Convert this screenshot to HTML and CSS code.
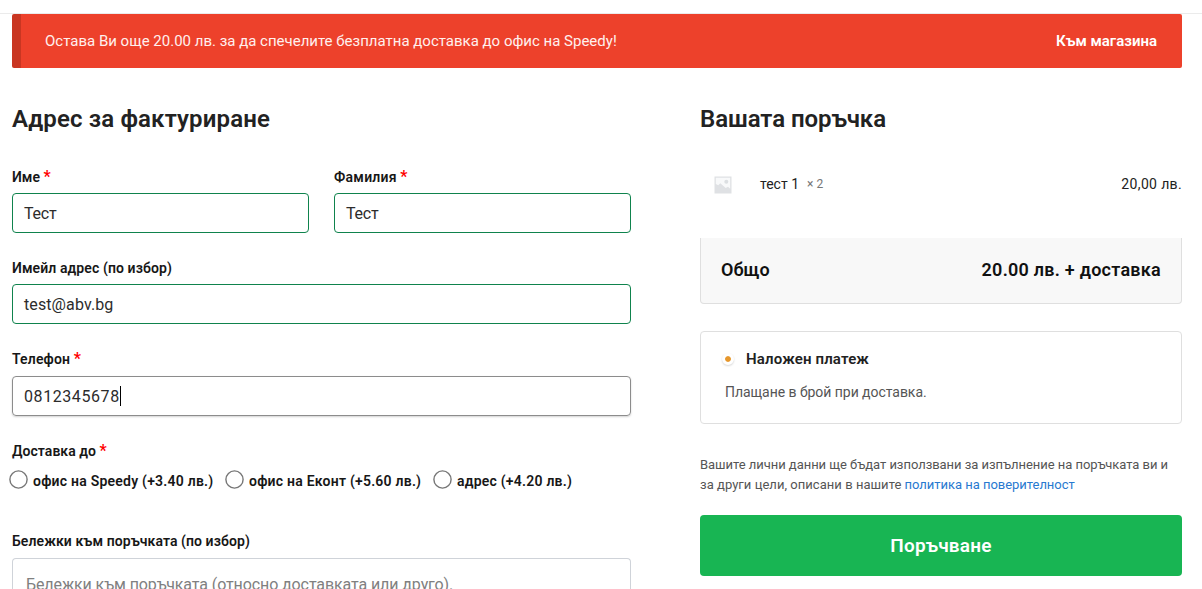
FILE: index.html
```html
<!DOCTYPE html>
<html lang="bg">
<head>
<meta charset="utf-8">
<title>Поръчка</title>
<link rel="stylesheet" href="styles.css">
</head>
<body>
<div class="topline"></div>
<div class="notice">
  <span class="notice-text">Остава Ви още 20.00 лв. за да спечелите безплатна доставка до офис на Speedy!</span>
  <a class="notice-link">Към магазина</a>
</div>
<main class="checkout">
  <section class="billing">
    <h2 class="title"><span class="t-billing">Адрес за фактуриране</span></h2>
    <div class="row">
      <div class="field">
        <div class="label"><span class="l-name">Име</span> <b class="req">*</b></div>
        <div class="input valid"><span class="v-test">Тест</span></div>
      </div>
      <div class="field">
        <div class="label"><span class="l-family">Фамилия</span> <b class="req">*</b></div>
        <div class="input valid"><span class="v-test">Тест</span></div>
      </div>
    </div>
    <div class="field">
      <div class="label"><span class="l-mail">Имейл адрес (по избор)</span></div>
      <div class="input valid"><span class="v-mail">test@abv.bg</span></div>
    </div>
    <div class="field phone">
      <div class="label"><span class="l-phone">Телефон</span> <b class="req">*</b></div>
      <div class="input focused"><span class="v-phone">0812345678</span><i class="caret"></i></div>
    </div>
    <div class="delivery">
      <div class="label"><span class="l-delivery">Доставка до</span> <b class="req">*</b></div>
      <div class="options">
        <div class="option"><svg class="radio" viewBox="0 0 19 19"><circle cx="9.5" cy="9.5" r="8.6"/></svg><span>офис на Speedy (+3.40 лв.)</span></div>
        <div class="option"><svg class="radio" viewBox="0 0 19 19"><circle cx="9.5" cy="9.5" r="8.6"/></svg><span>офис на Еконт (+5.60 лв.)</span></div>
        <div class="option"><svg class="radio" viewBox="0 0 19 19"><circle cx="9.5" cy="9.5" r="8.6"/></svg><span>адрес (+4.20 лв.)</span></div>
      </div>
    </div>
    <div class="field notes">
      <div class="label"><span class="l-notes">Бележки към поръчката (по избор)</span></div>
      <div class="textarea"><span class="v-notes">Бележки към поръчката (относно доставката или друго).</span></div>
    </div>
  </section>
  <section class="order">
    <h2 class="title"><span class="t-order">Вашата поръчка</span></h2>
    <div class="item">
      <svg class="thumb" width="18" height="18" viewBox="0 0 18 18">
        <rect x="0.5" y="0.5" width="17" height="17" fill="#dfe1e4"/>
        <path d="M1.8 1.8h14.4v11l-2.2-2-2.3 1.3-5.4-4.8-2 2-2.5-1.2z" fill="#f8f9fa"/>
        <circle cx="12.3" cy="5.8" r="2" fill="#dcdfe2"/>
      </svg>
      <span class="item-name">тест 1</span>
      <span class="item-qty">× 2</span>
      <span class="item-price">20,00 лв.</span>
    </div>
    <div class="total">
      <span class="total-label">Общо</span>
      <span class="total-sum">20.00 лв. + доставка</span>
    </div>
    <div class="payment">
      <div class="method"><i class="dot"></i><span class="method-name">Наложен платеж</span></div>
      <div class="method-info"><span>Плащане в брой при доставка.</span></div>
    </div>
    <div class="privacy">
      <div><span class="p-one">Вашите лични данни ще бъдат използвани за изпълнение на поръчката ви и</span></div>
      <div><span class="p-two">за други цели, описани в нашите</span> <a class="p-link">политика на поверителност</a></div>
    </div>
    <div class="submit"><span>Поръчване</span></div>
  </section>
</main>
</body>
</html>
```
FILE: styles.css
```css
* { box-sizing: border-box; }
html, body { height: 589px; overflow: hidden; }
body { margin: 0; background: #fff; color: #222; font-family: Roboto, "Noto Sans", sans-serif; }
.topline { height: 14px; border-bottom: 1px solid #ebebeb; }
.notice { display: flex; justify-content: space-between; align-items: center; height: 54px; margin: 0 20px 0 12px; padding: 0 25px 0 24px; border-left: 9px solid #c93622; border-radius: 2px; background: #ed412b; color: #fff; font-size: 15px; line-height: 20px; }
.notice-text { color: #fff0ee; }
.notice-link { font-weight: 600; }
.checkout { display: flex; justify-content: space-between; margin: 0 20px 0 12px; }
.billing { width: 619px; }
.order { width: 482px; }
.title { margin: 35px 0 0; font-size: 24px; font-weight: 600; line-height: 32px; color: #222; }
.t-billing { letter-spacing: 0.16px; }
.t-order { letter-spacing: -0.06px; }
.row { display: grid; grid-template-columns: 297px 297px; gap: 25px; margin-top: 32px; }
.label { height: 26px; font-size: 14px; font-weight: 600; line-height: 20px; color: #171717; white-space: nowrap; }
.l-family { letter-spacing: 0.25px; }
.l-mail { letter-spacing: 0.1px; }
.l-phone { letter-spacing: 0.15px; }
.l-delivery { letter-spacing: 0.05px; }
.l-notes { letter-spacing: 0.08px; }
.req { color: #f00; font-weight: 600; font-size: 16px; line-height: 10px; }
.field { height: 91px; }
.phone { height: 92px; }
.phone .label { height: 27px; }
.input { display: flex; align-items: center; height: 40px; padding: 0 11px; border: 1px solid #8c8c8c; border-radius: 4px; font-size: 16px; color: #2c2c2c; }
.valid { border-color: #0f834d; }
.focused { box-shadow: 0 1px 2px rgba(0,0,0,.18); }
.v-test { letter-spacing: -0.2px; }
.v-mail { letter-spacing: 0.1px; }
.v-phone { letter-spacing: 0.58px; }
.v-notes { letter-spacing: -0.1px; }
.caret { width: 1px; height: 20px; background: #000; }
.delivery { height: 90px; }
.options { display: flex; margin: 1px 0 0 -3px; }
.option { display: flex; align-items: center; font-size: 14px; font-weight: 600; line-height: 20px; letter-spacing: 0.23px; color: #171717; white-space: nowrap; }
.option span { padding-top: 3px; }
.option:nth-child(1) { width: 216px; }
.option:nth-child(2) { width: 208px; }
.radio { flex: none; width: 19px; height: 19px; margin: 0 5px 1px 0; fill: #fff; stroke: #767676; stroke-width: 1.4; }
.notes { height: 58px; }
.textarea { height: 31px; margin-top: 1px; padding: 15px 13px 0; border: 1px solid #cfd3d9; border-bottom: 0; border-radius: 4px 4px 0 0; font-size: 16px; line-height: 21px; color: #808080; white-space: nowrap; }
.item { display: flex; align-items: center; height: 103px; padding: 0 0 5px 14px; font-size: 14px; color: #222; }
.thumb { margin: 2px 28px 0 0; }
.item-qty { margin-left: 8px; font-size: 12px; color: #767676; }
.item-price { margin-left: auto; letter-spacing: 0.35px; }
.total { display: flex; justify-content: space-between; align-items: center; height: 66px; padding: 0 20px 2px; border: 1px solid #dfdfdf; border-top: 0; border-radius: 0 0 4px 4px; background: #f8f8f8; font-size: 18px; font-weight: 600; color: #111; }
.total-sum { letter-spacing: 0.25px; }
.payment { height: 93px; margin-top: 27px; padding: 17px 20px 0 21px; border: 1px solid #dfdfdf; border-radius: 4px; }
.method { display: flex; align-items: center; height: 20px; font-size: 15px; font-weight: 600; letter-spacing: 0.15px; }
.dot { width: 12px; height: 12px; margin-right: 12px; border: 3px solid #fff; border-radius: 50%; background: #e6972c; background-clip: padding-box; box-shadow: 0 1px 2px rgba(0,0,0,.16); }
.method-info { margin: 13px 0 0 3px; font-size: 14px; line-height: 20px; letter-spacing: -0.04px; color: #555; }
.privacy { margin-top: 31px; font-size: 13px; line-height: 20px; color: #555; white-space: nowrap; }
.p-one { letter-spacing: -0.04px; }
.p-two { letter-spacing: 0.04px; }
.p-link { color: #2879d0; letter-spacing: -0.03px; }
.submit { display: flex; align-items: center; justify-content: center; height: 61px; margin-top: 20px; border-radius: 4px; background: #18b553; color: #fff; font-size: 19px; font-weight: 600; letter-spacing: 0.2px; }
```
